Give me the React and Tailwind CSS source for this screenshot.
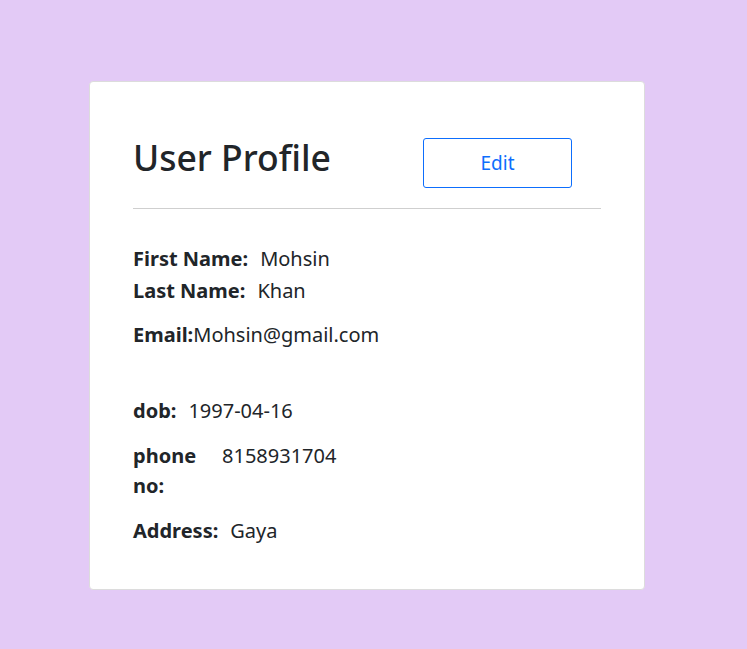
import React from 'react';

const Row = ({ label, value, className = '' }) => (
    <div className={`flex gap-3 ${className}`}>
        <span className="font-bold">{label}</span>
        <span>{value}</span>
    </div>
);

const App = () => {
    return (
        <div className="min-h-[649px] w-full bg-[#e3caf6] pt-[81px] pl-[89px]" style={{ fontFamily: '"Noto Sans", "Open Sans", sans-serif' }}>
            <div className="w-[556px] h-[509px] bg-white rounded-[4px] border border-[#dcdcdc] px-[43px] pt-[51px] text-[#212529]">
                <div className="flex items-start justify-between pr-[29px]">
                    <h1 className="text-[35.5px] leading-[48px] font-medium mt-[0px]">User Profile</h1>
                    <button className="w-[149px] h-[50px] border border-[#0d6efd] rounded-[3px] text-[#0d6efd] text-[19px] mt-[5px]">
                        Edit
                    </button>
                </div>
                <hr className="mt-[20px] border-t border-[#cfcfcf]" />

                <div className="mt-[35px] text-[20px] leading-[30px]">
                    <Row label="First Name:" value="Mohsin" />
                    <Row label="Last Name:" value="Khan" className="mt-[2px]" />
                    <div className="flex mt-[14px]">
                        <span className="font-bold">Email:</span>
                        <span>Mohsin@gmail.com</span>
                    </div>
                    <Row label="dob:" value="1997-04-16" className="mt-[46px]" />
                    <div className="flex mt-[15px]">
                        <span className="font-bold w-[89px] shrink-0">phone no:</span>
                        <span>8158931704</span>
                    </div>
                    <Row label="Address:" value="Gaya" className="mt-[15px]" />
                </div>
            </div>
        </div>
    );
};

export default App;
